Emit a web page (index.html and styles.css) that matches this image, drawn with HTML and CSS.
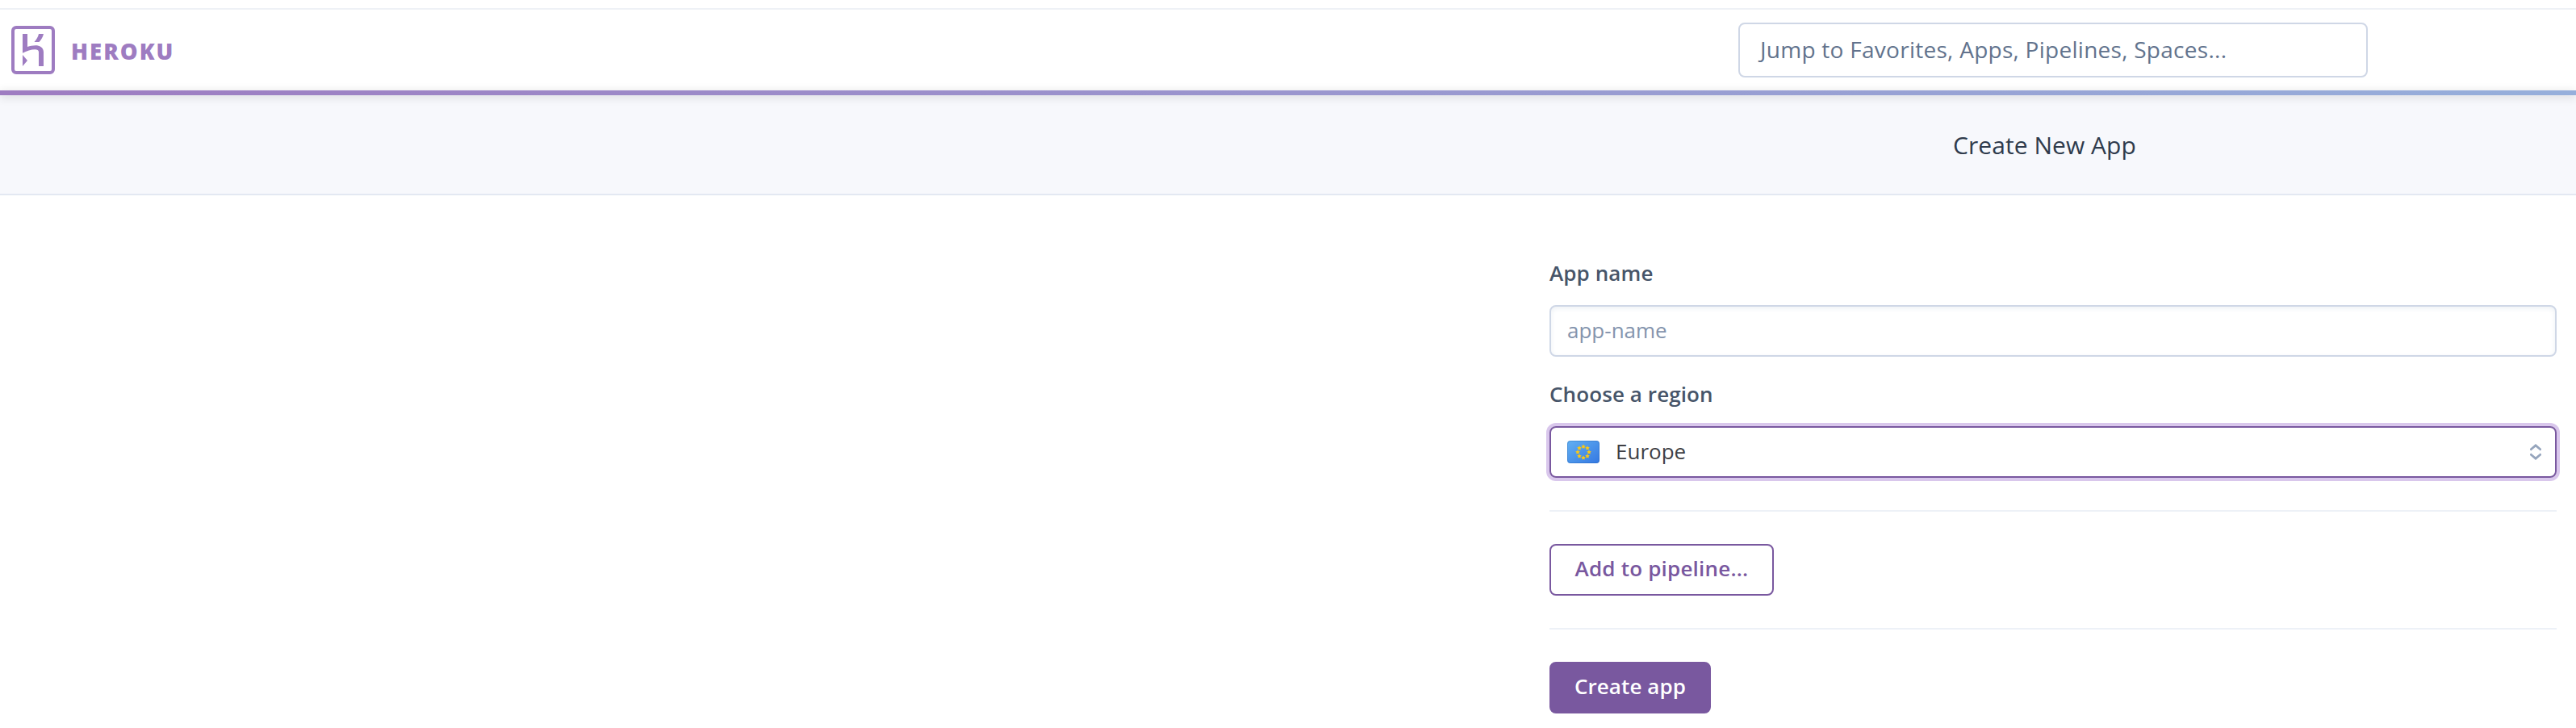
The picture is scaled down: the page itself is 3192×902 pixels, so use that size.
FILE: index.html
```html
<!DOCTYPE html>
<html lang="en">
<head>
<meta charset="utf-8">
<title>Create New App | Heroku</title>
<link rel="stylesheet" href="styles.css">
</head>
<body>
<header class="topbar">
  <a class="brand">
    <svg class="brand-mark" viewBox="0 0 54 60" width="54" height="60" fill="currentColor">
      <rect x="2" y="2" width="50" height="56" rx="4" fill="none" stroke="currentColor" stroke-width="4"/>
      <path d="M14 50V36l6 7z"/>
      <path d="M34 10h6c-.8 3.600-2.700 7-5.500 10h-6c2.700-3 4.700-6.400 5.500-10z"/>
      <path d="M14 10h6v15.900c3-.9 6.500-1.700 10-1.700 4.800 0 10 2.300 10 8.300V50h-6V32.500c0-2.500-2-3.300-4.500-3.300-5 0-10.500 2-15.500 4.600z"/>
    </svg>
    <span class="brand-name">HEROKU</span>
  </a>
  <div class="jump"><span class="jump-text">Jump to Favorites, Apps, Pipelines, Spaces...</span></div>
</header>
<div class="rainbow"></div>
<div class="subheader"><h1 class="title">Create New App</h1></div>
<main class="form">
  <label class="label"><span class="label-name">App name</span></label>
  <div class="field"><span class="placeholder">app-name</span></div>
  <label class="label label-second"><span class="label-region">Choose a region</span></label>
  <div class="field select">
    <svg class="flag" viewBox="0 0 40 28" width="40" height="28">
      <defs>
        <linearGradient id="sky" x1="0" y1="0" x2="1" y2="1"><stop offset="0" stop-color="#62b0f2"/><stop offset="1" stop-color="#3478e2"/></linearGradient>
        <path id="star" fill="#fdc911" d="M0-2.800.9-.9 2.800-.8 1.400.7 1.800 2.500 0 1.700-1.800 2.500-1.400.7-2.800-.8-.9-.9z"/>
      </defs>
      <rect width="40" height="28" rx="4" fill="url(#sky)"/>
      <rect x=".5" y=".5" width="39" height="27" rx="3.500" fill="none" stroke="#1d5fae" stroke-opacity=".35"/>
      <use href="#star" x="20" y="7.200"/><use href="#star" x="25" y="9"/><use href="#star" x="27" y="14"/><use href="#star" x="25" y="19"/>
      <use href="#star" x="20" y="21"/><use href="#star" x="15" y="19"/><use href="#star" x="13" y="14"/><use href="#star" x="15" y="9"/>
    </svg>
    <span class="value">Europe</span>
    <svg class="chevrons" viewBox="0 0 14 20" width="14" height="20" fill="none" stroke="#96a5bd" stroke-width="2.800"><path d="M.3 7.500 7 1.900 13.700 7.500M.3 12.500 7 18.100 13.700 12.500"/></svg>
  </div>
  <div class="rule"></div>
  <button class="btn btn-outline"><span class="btn-add">Add to pipeline...</span></button>
  <div class="rule"></div>
  <button class="btn btn-solid"><span class="btn-create">Create app</span></button>
</main>
</body>
</html>
```
FILE: styles.css
```css
* { box-sizing: border-box; }
body { margin: 0; background: #fff; font-family: "Open Sans", "Noto Sans", sans-serif; font-size: 26px; color: #3f3f44; height: 902px; overflow: hidden; white-space: nowrap; }
.topbar { margin-top: 10px; height: 102px; border-top: 2px solid #eef1f6; display: flex; align-items: flex-start; padding: 0 258px 0 14px; justify-content: space-between; }
.brand { display: flex; align-items: center; gap: 20px; margin-top: 20px; height: 60px; color: #9e7cc1; }
.brand-mark { display: block; }
.brand-name { font-family: "Noto Sans", sans-serif; font-size: 27.5px; font-weight: 900; letter-spacing: 2px; line-height: 60px; padding-top: 4px; }
.jump { width: 780px; height: 68px; margin-top: 16px; border: 2px solid #cfd7e6; border-radius: 8px; padding-left: 25px; line-height: 62px; font-size: 28px; letter-spacing: .27px; color: #62738d; }
.rainbow { height: 6px; background: linear-gradient(to right, #9e7cc1, #96afdb); position: relative; box-shadow: 0 2px 12px rgba(0,0,0,.16); }
.subheader { height: 124px; background: #f7f8fc; border-bottom: 2px solid #e3e8f2; padding-left: 1875px; display: flex; justify-content: center; }
.title { margin: 0; font-weight: 400; font-size: 30px; line-height: 123px; letter-spacing: .05px; color: #2f3b4c; }
.form { margin-left: 1920px; width: 1248px; padding-top: 76px; }
.label { display: block; height: 60px; line-height: 40px; font-weight: 600; letter-spacing: .1px; color: #475569; }
.label-second { margin-top: 26px; }
.field { height: 64px; border: 2px solid #cfd7e6; border-radius: 8px; padding: 0 17px 0 20px; display: flex; align-items: center; line-height: 58px; box-shadow: inset 0 2px 6px #edf1f5; }
.placeholder, .value { height: 60px; }
.placeholder { color: #8494ad; }
.select { border-color: #79589f; box-shadow: 0 0 0 4px #d9c7ec; }
.flag { margin-right: 20px; }
.chevrons { margin-left: auto; }
.rule { height: 2px; background: #edf1f7; margin: 40px 0; }
.btn { display: flex; align-items: flex-start; height: 64px; padding: 0; border: 2px solid #79589f; border-radius: 8px; font: 600 26px/57px "Open Sans", "Noto Sans", sans-serif; letter-spacing: .1px; justify-content: center; }
.btn-outline { width: 278px; background: #fff; color: #79589f; }
.btn-add { letter-spacing: .2px; }
.btn-solid { width: 200px; background: #79589f; color: #fff; }
```
